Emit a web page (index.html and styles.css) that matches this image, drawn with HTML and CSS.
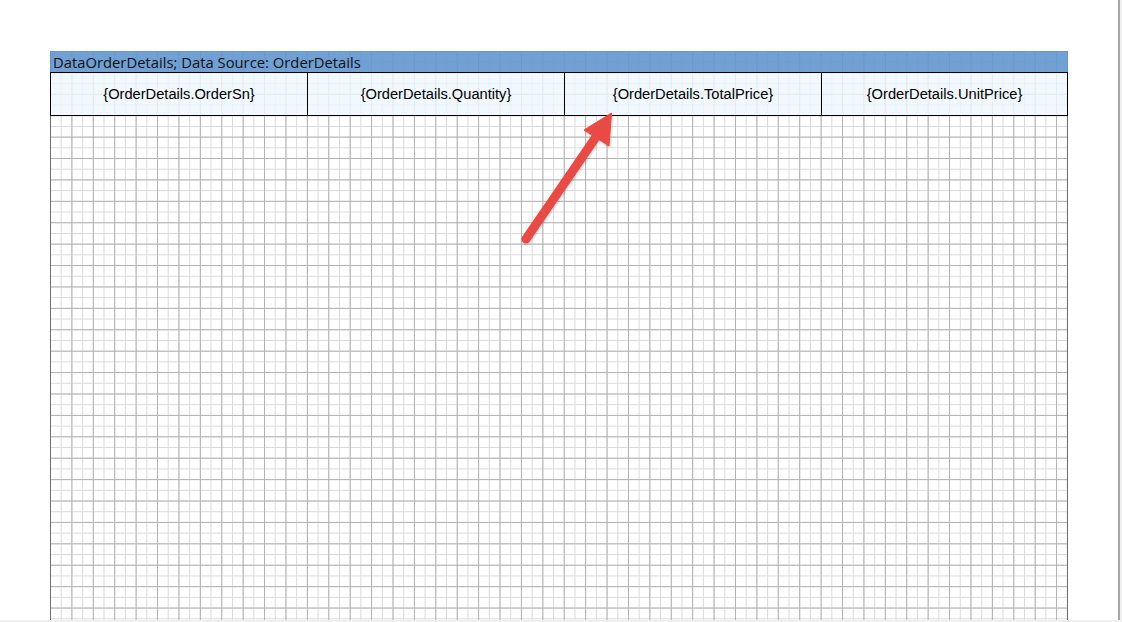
FILE: index.html
```html
<!DOCTYPE html>
<html>
<head>
<meta charset="utf-8">
<title>Report designer</title>
<link rel="stylesheet" href="styles.css">
</head>
<body>
<div class="viewport">
  <div class="page">
    <div class="band">DataOrderDetails; Data Source: OrderDetails</div>
    <div class="row">
      <div class="cell">{OrderDetails.OrderSn}</div>
      <div class="cell">{OrderDetails.Quantity}</div>
      <div class="cell">{OrderDetails.TotalPrice}</div>
      <div class="cell">{OrderDetails.UnitPrice}</div>
    </div>
  </div>
  <svg class="arrow" width="1122" height="622" viewBox="0 0 1122 622">
    <defs>
      <filter id="sh" x="-20%" y="-20%" width="140%" height="140%">
        <feDropShadow dx="0.5" dy="1" stdDeviation="1" flood-color="#000" flood-opacity="0.25"/>
      </filter>
    </defs>
    <g filter="url(#sh)" fill="#e84b45" stroke="#e84b45">
      <line x1="526" y1="239" x2="598" y2="134" stroke-width="9" stroke-linecap="round"/>
      <polygon points="611.5,113 584,130 609,146" stroke-width="1" stroke-linejoin="round"/>
    </g>
  </svg>
</div>
</body>
</html>
```
FILE: styles.css
```css
html, body {
  margin: 0;
  padding: 0;
}
body {
  background: #f0f0f0;
  width: 1122px;
  height: 622px;
  overflow: hidden;
}
.viewport {
  position: relative;
  width: 1120px;
  height: 620px;
  background: #ffffff;
  border-right: 2px solid #a8a8a8;
  box-sizing: border-box;
  padding: 51px 0 0 50px;
}
.page {
  width: 1018px;
  height: 569px;
  background-color: #ffffff;
  background-image:
    linear-gradient(to right, #b2b2b2 1px, transparent 1px),
    linear-gradient(to bottom, #b2b2b2 1px, transparent 1px),
    linear-gradient(to right, #dadada 1px, transparent 1px),
    linear-gradient(to bottom, #dadada 1px, transparent 1px);
  background-size: 21.42px 21.42px, 21.42px 21.42px, 10.71px 10.71px, 10.71px 10.71px;
  box-shadow: inset 1px 0 #6e6e6e, inset -1px 0 #6e6e6e;
}
.band {
  height: 21px;
  background: rgba(98, 150, 208, 0.9);
  color: #111111;
  font-family: "Open Sans", "Noto Sans", sans-serif;
  font-size: 14.8px;
  line-height: 22px;
  padding-left: 3px;
  white-space: nowrap;
}
.row {
  display: grid;
  grid-template-columns: 257px 257px 257px 1fr;
  height: 44px;
  box-sizing: border-box;
  border: 1px solid #000000;
}
.cell {
  background: rgba(238, 246, 254, 0.82);
  border-right: 1px solid #000000;
  display: flex;
  align-items: center;
  justify-content: center;
  font-family: "Liberation Sans", Arial, sans-serif;
  font-size: 14.67px;
  color: #000000;
  white-space: nowrap;
}
.cell:last-child {
  border-right: none;
}
.arrow {
  position: absolute;
  left: 0;
  top: 0;
  pointer-events: none;
}
```
